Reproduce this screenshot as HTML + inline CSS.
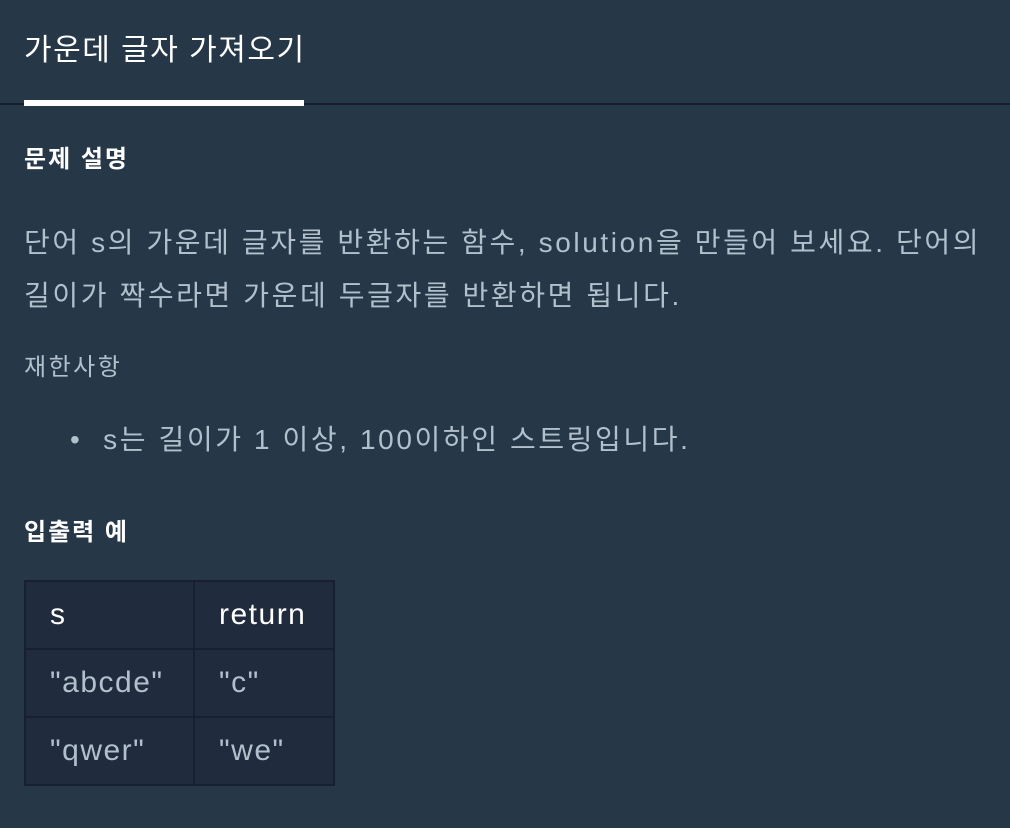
<!DOCTYPE html>
<html><head><meta charset="utf-8"><style>
body{margin:0;width:1010px;height:828px;background:#263747;font-family:"Liberation Sans","Noto Sans CJK KR",sans-serif;color:#b2c0cc;overflow:hidden;position:relative}
.a{position:absolute;white-space:nowrap}
.t{left:24px;top:31px;font-size:30px;color:#fff;line-height:40px;letter-spacing:1.5px}
.hr{left:0;top:103px;width:1010px;height:2px;background:#172030}
.ul{left:24px;top:100px;width:280px;height:6px;background:#fff}
.h{font-size:24px;font-weight:bold;color:#fff;line-height:30px;letter-spacing:2px}
.p{font-size:28px;line-height:53px;letter-spacing:2.6px}
table{position:absolute;left:24px;top:580px;border-collapse:collapse;background:#202b3d}
td{border:2px solid #172030;height:66px;padding:0 0 0 24px;font-size:30px;letter-spacing:1.5px;color:#b2c0cc;box-sizing:border-box}
tr:first-child td{color:#fff}
</style></head><body>
<div class="a t">가운데 글자 가져오기</div>
<div class="a hr"></div><div class="a ul"></div>
<div class="a h" style="left:24px;top:145px">문제 설명</div>
<div class="a p" style="left:24px;top:216px">단어 s의 가운데 글자를 반환하는 함수, solution을 만들어 보세요. 단어의<br>길이가 짝수라면 가운데 두글자를 반환하면 됩니다.</div>
<div class="a" style="left:24px;top:352px;font-size:24px;line-height:32px;letter-spacing:2.5px">재한사항</div>
<div class="a p" style="left:70px;top:413px">•&nbsp; s는 길이가 1 이상, 100이하인 스트링입니다.</div>
<div class="a h" style="left:24px;top:518px">입출력 예</div>
<table>
<tr><td style="width:169px;height:68px">s</td><td style="width:140px">return</td></tr>
<tr><td style="height:68px">"abcde"</td><td>"c"</td></tr>
<tr><td style="height:68px">"qwer"</td><td>"we"</td></tr>
</table>
</body></html>
